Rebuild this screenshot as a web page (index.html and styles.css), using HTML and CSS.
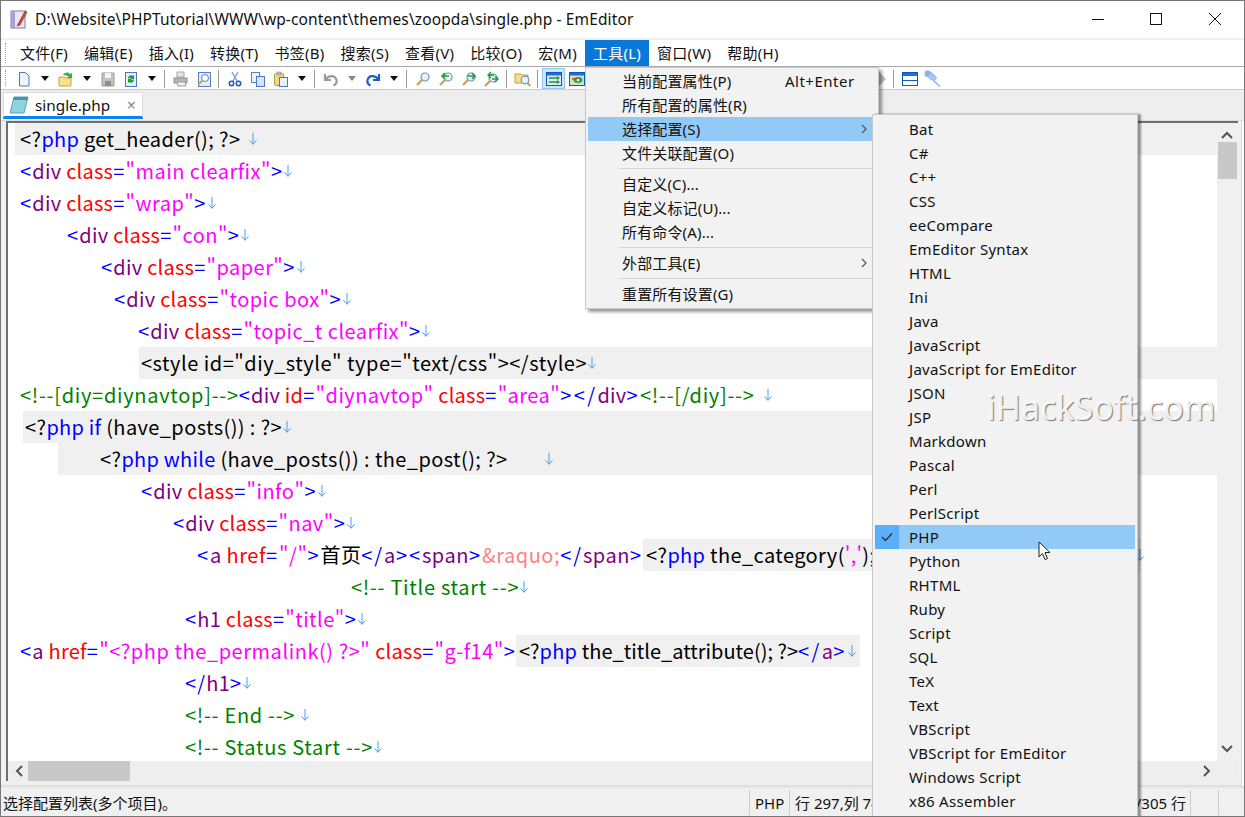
FILE: index.html
```html
<!DOCTYPE html>
<html lang="zh">
<head>
<meta charset="utf-8">
<title>EmEditor</title>
<link rel="stylesheet" href="styles.css">
</head>
<body>
<svg class="defs" width="0" height="0" aria-hidden="true">
  <symbol id="nl" viewBox="0 0 10 16"><path d="M5 1v13M1 9.5l4 4.5 4-4.5" fill="none" stroke="#3d9df5" stroke-width="1.1"/></symbol>
  <symbol id="chev" viewBox="0 0 6 10"><path d="M1 1l4 4-4 4" fill="none" stroke="#555" stroke-width="1.2"/></symbol>
</svg>
<div class="window">
  <header class="titlebar">
    <svg class="appicon" viewBox="0 0 18 20" width="18" height="20"><rect x="1" y="2" width="14" height="17" fill="#e9e6f5" stroke="#7f78b0"/><rect x="1" y="2" width="4" height="17" fill="#a8a2d0"/><path d="M8 15L15 2l2 1-7 13-3 1z" fill="#c8502a" stroke="#7a3318" stroke-width=".6"/></svg>
    <span class="titletext">D:\Website\PHPTutorial\WWW\wp-content\themes\zoopda\single.php - EmEditor</span>
    <div class="winctrls">
      <span class="winbtn"><svg viewBox="0 0 12 12" width="12" height="12"><path d="M0 6.5h12" stroke="#111"/></svg></span>
      <span class="winbtn"><svg viewBox="0 0 12 12" width="12" height="12"><rect x=".5" y=".5" width="11" height="11" fill="none" stroke="#111"/></svg></span>
      <span class="winbtn"><svg viewBox="0 0 12 12" width="12" height="12"><path d="M0 0l12 12M12 0L0 12" stroke="#111"/></svg></span>
    </div>
  </header>
  <nav class="menubar">
    <span class="mi">文件(F)</span><span class="mi">编辑(E)</span><span class="mi">插入(I)</span><span class="mi">转换(T)</span><span class="mi">书签(B)</span><span class="mi">搜索(S)</span><span class="mi">查看(V)</span><span class="mi">比较(O)</span><span class="mi">宏(M)</span><span class="mi active">工具(L)</span><span class="mi">窗口(W)</span><span class="mi">帮助(H)</span>
  </nav>
  <div class="toolbar">
    <span class="tb"><svg viewBox="0 0 16 16" width="16" height="16"><path d="M3.5 1.5h6l3.500 3.500v10h-9.500z" fill="#eef4fd" stroke="#4d76c4"/></svg></span><span class="dd"></span>
    <span class="tb"><svg viewBox="0 0 16 16" width="16" height="16"><path d="M1 6h5l1 1h6v8H1z" fill="#fbe28a" stroke="#c9a23c"/><path d="M5 4c2-3 5-3 7-1l2-1v5h-5l1.500-1.500C9 4.500 7 4 5 4z" fill="#3fae3a"/></svg></span><span class="dd"></span>
    <span class="tb"><svg viewBox="0 0 16 16" width="16" height="16"><path d="M2 2h12v13H2z" fill="#c3c3c3" stroke="#9a9a9a"/><rect x="5" y="2" width="6" height="5" fill="#f4f4f4"/><rect x="5" y="10" width="6" height="5" fill="#8d8d8d"/></svg></span>
    <span class="tb"><svg viewBox="0 0 16 16" width="16" height="16"><rect x="2.500" y="1.500" width="11" height="14" fill="#e6f0fc" stroke="#4d76c4"/><path d="M5 7a3 3 0 0 1 5-2l1-1v4H7l1-1a1.500 1.500 0 0 0-2 1zM11 9a3 3 0 0 1-5 2l-1 1V8h4l-1 1a1.500 1.500 0 0 0 2-1z" fill="#1d9a3a"/></svg></span><span class="dd"></span>
    <span class="sep"></span>
    <span class="tb"><svg viewBox="0 0 16 16" width="16" height="16"><path d="M4 1h7v5H4z" fill="#e4e8f0" stroke="#9aa"/><path d="M1 7h13v5H1z" fill="#b5b8bd" stroke="#85888c"/><path d="M4 11l1 4h8l-1-4z" fill="#f0f0f0" stroke="#999"/></svg></span>
    <span class="tb"><svg viewBox="0 0 16 16" width="16" height="16"><rect x="2.500" y="1.500" width="12" height="14" fill="#e4eefb" stroke="#5b7fc7"/><circle cx="9" cy="7" r="3.500" fill="#fff" stroke="#5b7fc7"/><path d="M6.500 9.500L2 14" stroke="#d89a4a" stroke-width="2"/></svg></span>
    <span class="sep"></span>
    <span class="tb"><svg viewBox="0 0 16 16" width="16" height="16"><path d="M5 1l5 9M11 1L6 10" stroke="#7f9fd0" stroke-width="1.400"/><circle cx="4.500" cy="12.500" r="2.200" fill="none" stroke="#1f55b4" stroke-width="1.500"/><circle cx="11.500" cy="12.500" r="2.200" fill="none" stroke="#1f55b4" stroke-width="1.500"/></svg></span>
    <span class="tb"><svg viewBox="0 0 16 16" width="16" height="16"><rect x="1.500" y="1.500" width="8" height="10" fill="#eaf2fc" stroke="#5b7fc7"/><rect x="6.500" y="5.500" width="8" height="10" fill="#d7e5f8" stroke="#4d76c4"/></svg></span>
    <span class="tb"><svg viewBox="0 0 16 16" width="16" height="16"><rect x="1.500" y="2.500" width="9" height="12" rx="1" fill="#f3d882" stroke="#b89a4a"/><rect x="4" y="1" width="4" height="3" fill="#bbb" stroke="#888" stroke-width=".5"/><rect x="6.500" y="6.500" width="8" height="9" fill="#e9f1fb" stroke="#4d76c4"/></svg></span><span class="dd"></span>
    <span class="sep"></span>
    <span class="tb"><svg viewBox="0 0 16 16" width="16" height="16"><path d="M2 3v6h6M2.500 8.500C6 4 12 4 13.500 9c.6 2.500-1 4.500-3 5.500" fill="none" stroke="#9a9a9a" stroke-width="2.200"/></svg></span><span class="dd dim"></span>
    <span class="tb"><svg viewBox="0 0 16 16" width="16" height="16"><path d="M14 3v6H8M13.500 8.500C10 4 4 4 2.500 9c-.6 2.500 1 4.500 3 5.500" fill="none" stroke="#1763c4" stroke-width="2.200"/></svg></span><span class="dd"></span>
    <span class="sep"></span>
    <span class="tb"><svg viewBox="0 0 16 16" width="16" height="16"><circle cx="10" cy="6" r="4" fill="#e8f3ff" stroke="#6a93c9" stroke-width="1.200"/><path d="M7 9l-5 5" stroke="#d29a4b" stroke-width="2.200"/></svg></span>
    <span class="tb"><svg viewBox="0 0 16 16" width="16" height="16"><circle cx="10" cy="6" r="4" fill="#e8f3ff" stroke="#6a93c9" stroke-width="1.200"/><path d="M7 9l-5 5" stroke="#d29a4b" stroke-width="2.200"/><path d="M4 5h7M7 2L4 5l3 3" fill="none" stroke="#2a9a33" stroke-width="1.500"/></svg></span>
    <span class="tb"><svg viewBox="0 0 16 16" width="16" height="16"><circle cx="10" cy="6" r="4" fill="#e8f3ff" stroke="#6a93c9" stroke-width="1.200"/><path d="M7 9l-5 5" stroke="#d29a4b" stroke-width="2.200"/><path d="M7 5h7M11 2l3 3-3 3" fill="none" stroke="#2a9a33" stroke-width="1.500"/></svg></span>
    <span class="tb"><svg viewBox="0 0 16 16" width="16" height="16"><circle cx="9" cy="7" r="4" fill="#e8f3ff" stroke="#6a93c9" stroke-width="1.200"/><path d="M6 10l-5 5" stroke="#d29a4b" stroke-width="2.200"/><path d="M4 4h6M7 1L4 4l3 3M8 8h6M11 5l3 3-3 3" fill="none" stroke="#2a9a33" stroke-width="1.400"/></svg></span>
    <span class="sep"></span>
    <span class="tb"><svg viewBox="0 0 18 16" width="18" height="16"><path d="M1 3h6l1 1h6v8H1z" fill="#f6dc90" stroke="#c9a23c"/><circle cx="11" cy="9" r="3.800" fill="#e8f3ff" stroke="#6a93c9" stroke-width="1.200"/><path d="M13.500 12l3 3" stroke="#d29a4b" stroke-width="2"/></svg></span>
    <span class="sep"></span>
    <span class="tb on"><svg viewBox="0 0 16 16" width="16" height="16"><rect x=".5" y="1.500" width="15" height="13" fill="#dbeafb" stroke="#0b5cc0"/><rect x="1" y="2" width="14" height="2.500" fill="#1a73d4"/><path d="M3 7h8M3 11h8" stroke="#1f9a2e" stroke-width="1.500"/><path d="M11 5l3 2-3 2zM11 9l3 2-3 2z" fill="#1f9a2e"/></svg></span>
    <span class="tb"><svg viewBox="0 0 16 16" width="16" height="16"><rect x=".5" y="1.500" width="15" height="13" fill="#cfe5c5" stroke="#0b5cc0"/><rect x="1" y="2" width="14" height="2.500" fill="#1a73d4"/><ellipse cx="9" cy="9" rx="4.500" ry="3" fill="#2aa845"/><path d="M3 8h8" stroke="#d8372b" stroke-width="1.400"/><circle cx="9" cy="9" r="1.300" fill="#fff"/></svg></span>
    <span class="tb-gap"></span>
    <span class="dd-right"></span>
    <span class="sep"></span>
    <span class="tb"><svg viewBox="0 0 16 16" width="16" height="16"><rect x=".5" y="1.500" width="15" height="13" fill="#fff" stroke="#0b5cc0"/><rect x="1" y="2" width="14" height="3" fill="#1a73d4"/><path d="M1 9.500h14" stroke="#0b5cc0"/></svg></span>
    <span class="tb"><svg viewBox="0 0 16 16" width="17" height="17"><circle cx="3.500" cy="3.500" r="3" fill="#86b2ea"/><path d="M3 6l4-4 5 5-2 3-4-1z" fill="#a6c6f0" stroke="#86b2ea" stroke-width=".6"/><path d="M9 10l6 5.500" stroke="#8db6ea" stroke-width="1.400"/></svg></span>
  </div>
  <div class="tabbar">
    <div class="tab">
      <svg viewBox="0 0 20 18" width="20" height="18"><path d="M5 1h14l-4 16H1z" fill="#8fd3df" stroke="#5aa4b5"/><path d="M5 1h14l-1 3H4z" fill="#4a8fb0"/></svg>
      <span class="tabname">single.php</span>
      <span class="tabclose">×</span>
    </div>
  </div>
  <div class="editor">
    <div class="editor-main">
      <div class="code">
        <div class="ln hl in15 pad5"><span class="k">&lt;?</span><span class="p">php</span><span class="k"> get_header(); ?&gt; </span><svg class="nl gap6"><use href="#nl"/></svg></div>
        <div class="ln in20"><span class="b">&lt;</span><span class="t">div</span> <span class="a">class</span><span class="b">=</span><span class="s">"main clearfix"</span><span class="b">&gt;</span><svg class="nl"><use href="#nl"/></svg></div>
        <div class="ln in20"><span class="b">&lt;</span><span class="t">div</span> <span class="a">class</span><span class="b">=</span><span class="s">"wrap"</span><span class="b">&gt;</span><svg class="nl"><use href="#nl"/></svg></div>
        <div class="ln in67"><span class="b">&lt;</span><span class="t">div</span> <span class="a">class</span><span class="b">=</span><span class="s">"con"</span><span class="b">&gt;</span><svg class="nl"><use href="#nl"/></svg></div>
        <div class="ln in101"><span class="b">&lt;</span><span class="t">div</span> <span class="a">class</span><span class="b">=</span><span class="s">"paper"</span><span class="b">&gt;</span><svg class="nl"><use href="#nl"/></svg></div>
        <div class="ln in114"><span class="b">&lt;</span><span class="t">div</span> <span class="a">class</span><span class="b">=</span><span class="s">"topic box"</span><span class="b">&gt;</span><svg class="nl"><use href="#nl"/></svg></div>
        <div class="ln in138"><span class="b">&lt;</span><span class="t">div</span> <span class="a">class</span><span class="b">=</span><span class="s">"topic_t clearfix"</span><span class="b">&gt;</span><svg class="nl"><use href="#nl"/></svg></div>
        <div class="ln hl in139 pad2"><span class="k wide-k">&lt;style id="diy_style" type="text/css"&gt;&lt;/style&gt;</span><svg class="nl"><use href="#nl"/></svg></div>
        <div class="ln in20"><span class="c">&lt;!--[diy=diynavtop]--&gt;</span><span class="b">&lt;</span><span class="t">div</span> <span class="a">id</span><span class="b">=</span><span class="s">"diynavtop"</span> <span class="a">class</span><span class="b">=</span><span class="s">"area"</span><span class="b2">&gt;&lt;/</span><span class="t">div</span><span class="b2">&gt;</span><span class="c">&lt;!--[/diy]--&gt;</span><svg class="nl gap8"><use href="#nl"/></svg></div>
        <div class="ln hl in23 pad2"><span class="k">&lt;?</span><span class="p">php if</span><span class="k"> (have_posts()) : ?&gt;</span><svg class="nl"><use href="#nl"/></svg></div>
        <div class="ln hl in58 pad42"><span class="k">&lt;?</span><span class="p">php while</span><span class="k"> (have_posts()) : the_post(); ?&gt;</span><svg class="nl gap36"><use href="#nl"/></svg></div>
        <div class="ln in141"><span class="b">&lt;</span><span class="t">div</span> <span class="a">class</span><span class="b">=</span><span class="s">"info"</span><span class="b">&gt;</span><svg class="nl"><use href="#nl"/></svg></div>
        <div class="ln in173"><span class="b">&lt;</span><span class="t">div</span> <span class="a">class</span><span class="b">=</span><span class="s">"nav"</span><span class="b">&gt;</span><svg class="nl"><use href="#nl"/></svg></div>
        <div class="ln in197 wide"><span class="b">&lt;</span><span class="t">a</span> <span class="a">href</span><span class="b">=</span><span class="s">"/"</span><span class="b">&gt;</span><span class="k">首页</span><span class="b">&lt;/</span><span class="t">a</span><span class="b">&gt;&lt;</span><span class="t">span</span><span class="b">&gt;</span><span class="e">&amp;raquo;</span><span class="b">&lt;/</span><span class="t">span</span><span class="b">&gt;</span><span class="mark w-cat"><span class="k">&lt;?</span><span class="p">php</span><span class="k"> the_category(</span><span class="s">','</span><span class="k">);</span></span><svg class="nl nl-far"><use href="#nl"/></svg></div>
        <div class="ln in351"><span class="c">&lt;!-- Title start --&gt;</span><svg class="nl"><use href="#nl"/></svg></div>
        <div class="ln in185"><span class="b">&lt;</span><span class="t">h1</span> <span class="a">class</span><span class="b">=</span><span class="s">"title"</span><span class="b">&gt;</span><svg class="nl"><use href="#nl"/></svg></div>
        <div class="ln in20"><span class="b">&lt;</span><span class="t">a</span> <span class="a">href</span><span class="b">=</span><span class="s s-long">"&lt;?php the_permalink() ?&gt;"</span> <span class="a">class</span><span class="b">=</span><span class="s">"g-f14"</span><span class="b">&gt;</span><span class="mark"><span class="k k0">&lt;?</span><span class="p">php</span><span class="k k0"> the_title_attribute(); ?&gt;</span><span class="b2">&lt;/</span><span class="t">a</span><span class="b2">&gt;</span><svg class="nl"><use href="#nl"/></svg></span></div>
        <div class="ln in185"><span class="b">&lt;/</span><span class="t">h1</span><span class="b">&gt;</span><svg class="nl"><use href="#nl"/></svg></div>
        <div class="ln in185"><span class="c">&lt;!-- End --&gt;</span><svg class="nl gap5"><use href="#nl"/></svg></div>
        <div class="ln in185"><span class="c">&lt;!-- Status Start --&gt;</span><svg class="nl"><use href="#nl"/></svg></div>
      </div>
      <div class="vscroll">
        <svg class="sb-a" viewBox="0 0 12 8" width="12" height="8"><path d="M1 7l5-5 5 5" fill="none" stroke="#555" stroke-width="2"/></svg>
        <div class="vthumb"></div>
        <svg class="sb-a down" viewBox="0 0 12 8" width="12" height="8"><path d="M1 1l5 5 5-5" fill="none" stroke="#555" stroke-width="2"/></svg>
      </div>
    </div>
    <div class="hscroll">
      <svg class="sb-h" viewBox="0 0 8 12" width="8" height="12"><path d="M7 1L2 6l5 5" fill="none" stroke="#555" stroke-width="2"/></svg>
      <div class="hthumb"></div>
      <svg class="sb-h right" viewBox="0 0 8 12" width="8" height="12"><path d="M1 1l5 5-5 5" fill="none" stroke="#555" stroke-width="2"/></svg>
    </div>
  </div>
  <footer class="statusbar">
    <span class="stmsg">选择配置列表(多个项目)。</span>
    <span class="stseg st-php">PHP</span>
    <span class="stseg st-pos">行 297,列 74</span>
    <span class="stseg st-total">297/305 行</span>
    <span class="stseg st-x"></span>
    <span class="stgrip"></span>
  </footer>

  <div class="menu tools">
    <div class="row"><span>当前配置属性(P)</span><span class="short">Alt+Enter</span></div>
    <div class="row"><span>所有配置的属性(R)</span></div>
    <div class="row sel"><span>选择配置(S)</span><svg class="chev"><use href="#chev"/></svg></div>
    <div class="row"><span>文件关联配置(O)</span></div>
    <div class="msep"></div>
    <div class="row"><span>自定义(C)...</span></div>
    <div class="row"><span>自定义标记(U)...</span></div>
    <div class="row"><span>所有命令(A)...</span></div>
    <div class="msep"></div>
    <div class="row"><span>外部工具(E)</span><svg class="chev"><use href="#chev"/></svg></div>
    <div class="msep"></div>
    <div class="row"><span>重置所有设置(G)</span></div>
  </div>
  <div class="menu configs">
    <div class="row">Bat</div><div class="row">C#</div><div class="row">C++</div><div class="row">CSS</div><div class="row">eeCompare</div><div class="row">EmEditor Syntax</div><div class="row">HTML</div><div class="row">Ini</div><div class="row">Java</div><div class="row">JavaScript</div><div class="row">JavaScript for EmEditor</div><div class="row">JSON</div><div class="row">JSP</div><div class="row">Markdown</div><div class="row">Pascal</div><div class="row">Perl</div><div class="row">PerlScript</div>
    <div class="row sel checked"><span class="checkbox"><svg viewBox="0 0 12 10" width="12" height="10"><path d="M1 5l3.500 3.500L11 1.500" fill="none" stroke="#333" stroke-width="1.500"/></svg></span>PHP</div>
    <div class="row">Python</div><div class="row">RHTML</div><div class="row">Ruby</div><div class="row">Script</div><div class="row">SQL</div><div class="row">TeX</div><div class="row">Text</div><div class="row">VBScript</div><div class="row">VBScript for EmEditor</div><div class="row">Windows Script</div><div class="row">x86 Assembler</div>
  </div>
  <div class="watermark">iHackSoft.com</div>
  <svg class="pointer" viewBox="0 0 13 20" width="13" height="20"><path d="M1 1v15l3.500-3.500 2.500 6 2.500-1-2.500-6h5z" fill="#fff" stroke="#222"/></svg>
</div>
</body>
</html>
```
FILE: styles.css
```css
* { box-sizing: border-box; }
html, body { margin: 0; padding: 0; }
body { width: 1245px; height: 817px; overflow: hidden; background: #fff; color: #000;
  font-family: "Noto Sans", "Noto Sans CJK SC", sans-serif; font-size: 15px; }
.defs { position: absolute; }
.window { position: relative; width: 1245px; height: 817px; border: 1px solid #777; display: flex; flex-direction: column; overflow: hidden; background: #fff; }

.titlebar { height: 37px; flex: none; display: flex; align-items: center; padding: 0 0 2px 9px; background: #fff; }
.appicon { flex: none; }
.titletext { margin-left: 7px; font-size: 15.500px; color: #111; letter-spacing: .12px; white-space: nowrap; }
.winctrls { margin-left: auto; display: flex; }
.winbtn { width: 58.500px; height: 35px; display: flex; align-items: center; justify-content: center; }

.menubar { height: 29px; flex: none; display: flex; align-items: stretch; padding-left: 11px; background: #fff; border-top: 2px solid #f0f0f0; border-bottom: 1px solid #aaa; position: relative; }
.menubar::before, .toolbar::before { content: ""; position: absolute; left: 4px; top: 3px; bottom: 3px; border-left: 1px dotted #999; }
.mi { display: flex; align-items: center; padding: 0 8px 2px; font-size: 15px; letter-spacing: .25px; color: #111; white-space: nowrap; }
.mi.active { background: #0a78d7; color: #fff; }

.toolbar { height: 23px; flex: none; display: flex; align-items: center; padding: 1px 0 0 11px; background: #fff; border-bottom: 1px solid #ccc; position: relative; }
.tb { width: 23px; height: 21px; flex: none; display: flex; align-items: center; justify-content: center; border: 1px solid transparent; }
.tb.on { background: #cde6fb; border-color: #8fc6f3; }
.dd { width: 19px; flex: none; display: flex; justify-content: center; }
.dd::before { content: ""; border-left: 4.500px solid transparent; border-right: 4.500px solid transparent; border-top: 5px solid #111; }
.dd.dim::before { border-top-color: #888; }
.sep { width: 8px; height: 18px; flex: none; position: relative; }
.sep::before { content: ""; position: absolute; left: 3px; top: 0; bottom: 0; width: 1px; background: #999; }
.tb-gap { width: 291px; flex: none; }
.dd-right { width: 7px; margin-right: 4px; flex: none; height: 14px; border-left: 7px solid #bbb; border-top: 7px solid transparent; border-bottom: 7px solid transparent; }

.tabbar { height: 31px; flex: none; background: #eee; padding: 2px 0 0 2px; border-bottom: 1px solid #ddd; }
.tab { width: 140px; height: 27px; display: flex; align-items: center; background: #fff; border: 1px solid #ddd; border-bottom: 3px solid #0a84f0; padding: 0 0 0 5px; }
.tabname { margin-left: 6px; font-size: 15.300px; color: #111; }
.tabclose { margin-left: auto; margin-right: 6px; font-size: 16px; color: #888; line-height: 1; }

.editor { height: 665px; flex: none; background: #f0f0f0; margin-right: 2px; padding: 0 3px 3px 5px; display: flex; flex-direction: column; border-bottom: 1px solid #d8d8d8; border-right: 1px solid #ddd; }
.editor-main { height: 640px; flex: none; display: flex; border-top: 2px solid #6e6e6e; border-left: 2px solid #6e6e6e; }
.code { width: 1209px; flex: none; background: #fff; overflow: hidden; font-family: "Noto Sans CJK SC", "Noto Sans", sans-serif; font-size: 20px; letter-spacing: .25px; }
.ln { height: 32px; white-space: pre; line-height: 32px; position: relative; }
.hl { background: #f0f0f0; }
.in15 { margin-left: 7px; } .pad5 { padding-left: 5px; }
.in20 { padding-left: 12px; }
.in67 { padding-left: 59px; }
.in101 { padding-left: 93px; }
.in114 { padding-left: 106px; }
.in138 { padding-left: 130px; }
.in139 { margin-left: 131px; } .pad2 { padding-left: 2px; }
.in23 { margin-left: 15px; }
.in58 { margin-left: 50px; } .pad42 { padding-left: 42px; }
.in141 { padding-left: 133px; }
.in173 { padding-left: 165px; }
.in197 { padding-left: 189px; }
.in351 { padding-left: 343px; }
.in185 { padding-left: 177px; }
.k { color: #000; letter-spacing: .4px; } .p { color: #0000ff; } .b { color: #0000ff; letter-spacing: 1.200px; } .b2 { color: #0000ff; letter-spacing: 2.400px; } .t { color: #800080; }
.a { color: #ff0000; } .s { color: #ff00ff; letter-spacing: .45px; } .c { color: #008000; letter-spacing: .7px; } .e { color: #ff8080; }
.wide-k { letter-spacing: .51px; }
.k0 { letter-spacing: 0; }
.s-long { letter-spacing: .55px; }
.wide .b { letter-spacing: 1.900px; }
.wide .t, .wide .a, .wide .e, .wide .s { letter-spacing: .55px; }
.wide .mark .s { letter-spacing: .25px; }
.nl { width: 10px; height: 14px; margin-left: 0; vertical-align: 1px; }
.gap6 { margin-left: 3px; }
.gap5 { margin-left: 5px; }
.gap8 { margin-left: 8px; }
.gap36 { margin-left: 36px; }
.nl-far { position: absolute; left: 1127px; top: 9px; }
.mark { display: inline-block; height: 32px; vertical-align: top; background: #f0f0f0; padding: 0 3px; }
.w-cat { width: 498px; }

.vscroll { width: 20px; flex: none; background: #f0f0f0; display: flex; flex-direction: column; align-items: center; }
.sb-a { margin-top: 8px; flex: none; }
.sb-a.down { margin-top: auto; margin-bottom: 8px; }
.vthumb { width: 19px; height: 37px; margin-top: 3px; background: #c8c8c8; }
.hscroll { height: 20px; flex: none; background: #eee; display: flex; align-items: center; padding-left: 7px; border-left: 2px solid #6e6e6e; }
.sb-h.right { margin-left: auto; margin-right: 27px; }
.hthumb { width: 102px; height: 20px; margin-left: 5px; background: #c8c8c8; }

.statusbar { flex: 1; display: flex; align-items: stretch; background: #f0f0f0; font-size: 15px; color: #111; border-top: 2px solid #e4e4e4; }
.stmsg { width: 748px; flex: none; padding-left: 2px; display: flex; align-items: center; white-space: nowrap; }
.stseg { display: flex; align-items: center; border-left: 1px solid #ccc; padding-left: 5px; white-space: nowrap; overflow: hidden; margin: 2px 0 1px; }
.st-php { width: 40px; }
.st-pos { width: 120px; }
.st-total { width: 281px; justify-content: flex-end; padding-right: 4px; }
.st-x { width: 28px; }
.stgrip { flex: 1; border-left: 1px solid #ccc; margin: 2px 0 1px; }

.menu { position: absolute; background: #f2f2f2; border: 1px solid #c8c8c8; font-size: 15px; letter-spacing: .15px; color: #111; }
.tools { left: 584px; top: 66px; width: 294px; height: 242px; padding: 1px 5px 0 2px; box-shadow: 3px 3px 3px rgba(0,0,0,.4); }
.tools .row { height: 24px; display: flex; align-items: center; padding: 0 0 1px 34px; position: relative; }
.row.sel { background: #91c9f7; }
.short { position: absolute; left: 197px; letter-spacing: .5px; }
.chev { position: absolute; right: 6px; width: 6px; height: 10px; top: 7px; }
.msep { height: 7px; margin-left: 31px; position: relative; }
.msep::before { content: ""; position: absolute; left: 0; right: 0; top: 3px; height: 1px; background: #d4d4d4; }
.configs { left: 871px; top: 113px; width: 266px; height: 720px; padding: 2px 2px 0; letter-spacing: .28px; box-shadow: 3px 0 2px rgba(0,0,0,.4); }
.configs .row { height: 24px; display: flex; align-items: center; padding: 0 0 1px 34px; position: relative; white-space: nowrap; }
.checkbox { position: absolute; left: 0; top: 0; width: 24px; height: 24px; background: #5aaffa; display: flex; align-items: center; justify-content: center; }
.watermark { position: absolute; left: 986px; top: 383px; font-family: "Noto Sans", sans-serif; font-size: 34px; color: rgba(255,255,255,.9); text-shadow: 1px 1px 1px #777; white-space: nowrap; }
.pointer { position: absolute; left: 1037px; top: 540px; }
```
